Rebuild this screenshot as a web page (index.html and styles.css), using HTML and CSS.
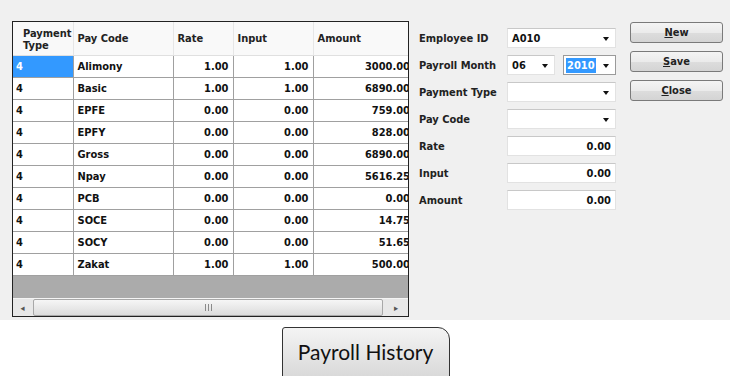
FILE: index.html
```html
<!DOCTYPE html>
<html lang="en">
<head>
  <meta charset="UTF-8">
  <title>Payroll History</title>
  <link rel="stylesheet" href="styles.css">
</head>
<body>

  <!-- Payroll window -->
  <div class="window">

    <!-- Grid -->
    <div class="grid">
      <div class="grid-body">
        <table>
          <colgroup>
            <col class="c-type"><col class="c-code"><col class="c-rate"><col class="c-input"><col class="c-amount">
          </colgroup>
          <thead>
            <tr>
              <th>Payment<br>Type</th>
              <th>Pay Code</th>
              <th>Rate</th>
              <th>Input</th>
              <th>Amount</th>
            </tr>
          </thead>
          <tbody id="rows"></tbody>
        </table>
      </div>
      <div class="hscroll">
        <div class="arrow">&#9666;</div>
        <div class="thumb"><span class="grip"></span></div>
        <div class="arrow right">&#9656;</div>
      </div>
    </div>

    <!-- Form -->
    <div class="form">
      <label>Employee ID</label>
      <div class="field combo">A010</div>

      <label>Payroll Month</label>
      <div class="pair">
        <div class="field combo month">06</div>
        <div class="field combo year focus"><span class="sel">2010</span></div>
      </div>

      <label>Payment Type</label>
      <div class="field combo"></div>

      <label>Pay Code</label>
      <div class="field combo"></div>

      <label>Rate</label>
      <div class="field num">0.00</div>

      <label>Input</label>
      <div class="field num">0.00</div>

      <label>Amount</label>
      <div class="field num">0.00</div>
    </div>

    <!-- Buttons -->
    <div class="buttons">
      <button><u>N</u>ew</button>
      <button><u>S</u>ave</button>
      <button><u>C</u>lose</button>
    </div>
  </div>

  <div class="caption">
    <div class="caption-btn">Payroll History</div>
  </div>

  <script>
    const data = [
      ['4', 'Alimony', '1.00', '1.00', '3000.00'],
      ['4', 'Basic', '1.00', '1.00', '6890.00'],
      ['4', 'EPFE', '0.00', '0.00', '759.00'],
      ['4', 'EPFY', '0.00', '0.00', '828.00'],
      ['4', 'Gross', '0.00', '0.00', '6890.00'],
      ['4', 'Npay', '0.00', '0.00', '5616.25'],
      ['4', 'PCB', '0.00', '0.00', '0.00'],
      ['4', 'SOCE', '0.00', '0.00', '14.75'],
      ['4', 'SOCY', '0.00', '0.00', '51.65'],
      ['4', 'Zakat', '1.00', '1.00', '500.00']
    ];

    const tbody = document.getElementById('rows');
    data.forEach((r, i) => {
      const tr = document.createElement('tr');
      r.forEach((v, j) => {
        const td = document.createElement('td');
        td.textContent = v;
        if (j >= 2) td.className = 'num';
        if (i === 0 && j === 0) td.className = 'selected';
        tr.appendChild(td);
      });
      tbody.appendChild(tr);
    });
  </script>

</body>
</html>
```

FILE: styles.css
```css
body {
  margin: 0;
  background: white;
  font-family: "DejaVu Sans Condensed", "DejaVu Sans", sans-serif;
  font-size: 11px;
  font-weight: bold;
  color: #111;
  overflow: hidden;
}
.window {
  background: #f0f0f0;
  height: 299px;
  padding: 21px 0 0 12px;
  display: flex;
  align-items: flex-start;
}

/* grid */
.grid {
  width: 395px;
  height: 294px;
  border: 1px solid #222;
  display: flex;
  flex-direction: column;
  background: #ababab;
}
.grid-body {
  flex: 1;
  overflow: hidden;
}
table {
  border-collapse: collapse;
  table-layout: fixed;
  width: 397px;
}
.c-type { width: 60px; }
.c-code { width: 100px; }
.c-rate { width: 60px; }
.c-input { width: 80px; }
.c-amount { width: 97px; }
th {
  height: 31px;
  padding: 0 4px;
  text-align: left;
  vertical-align: middle;
  background: #f9f9f9;
  border-right: 1px solid #e6e6e6;
  border-bottom: 1px solid #e0e0e0;
  line-height: 12px;
  color: #222;
}
th:first-child {
  padding-left: 10px;
  padding-top: 2px;
}
td {
  height: 21px;
  padding: 0 4px;
  background: white;
  border-right: 1px solid #a0a0a0;
  border-bottom: 1px solid #a0a0a0;
  white-space: nowrap;
  overflow: hidden;
}
td:first-child {
  padding-left: 3px;
}
td.num {
  text-align: right;
}
td:last-child {
  padding-right: 0;
  border-right: none;
}
td.selected {
  background: #3399ff;
  color: white;
}
.hscroll {
  height: 17px;
  display: flex;
  background: #e8e8e8;
  border-top: 1px solid #f4f4f4;
}
.arrow {
  width: 19px;
  font-size: 9px;
  color: #555;
  display: flex;
  align-items: center;
  justify-content: center;
}
.arrow.right {
  width: 24px;
}
.thumb {
  flex: 1;
  margin: 0 1px;
  border: 1px solid #a8a8a8;
  border-radius: 2px;
  background: linear-gradient(#f6f6f6, #dcdcdc);
  display: flex;
  align-items: center;
  justify-content: center;
}
.grip {
  width: 7px;
  height: 7px;
  background: repeating-linear-gradient(90deg, #8a8a8a 0 1px, transparent 1px 3px);
}

/* form */
.form {
  margin: 7px 0 0 10px;
  display: grid;
  grid-template-columns: 88px 109px;
  grid-auto-rows: 20px;
  row-gap: 7px;
}
.form label {
  display: flex;
  align-items: center;
  color: #222;
}
.field {
  background: white;
  border: 1px solid #e2e2e2;
  border-top-color: #c8c8c8;
  display: flex;
  align-items: center;
  padding: 0 4px;
  position: relative;
}
.field.num {
  justify-content: flex-end;
}
.field.combo::after {
  content: "";
  position: absolute;
  right: 6px;
  top: 8px;
  border-left: 3px solid transparent;
  border-right: 3px solid transparent;
  border-top: 4px solid #111;
}
.pair {
  display: flex;
  gap: 8px;
}
.pair .month {
  width: 38px;
}
.pair .year {
  width: 45px;
  padding-left: 2px;
}
.field.focus {
  border-color: #9a9a9a;
}
.sel {
  background: #3399ff;
  color: white;
  padding: 1px 1px;
}

/* buttons */
.buttons {
  margin-left: 14px;
  margin-top: 1px;
  display: flex;
  flex-direction: column;
  gap: 8px;
}
button {
  width: 93px;
  height: 21px;
  border: 1px solid #7a7a7a;
  border-radius: 3px;
  background: linear-gradient(#f4f4f4 0%, #ebebeb 50%, #dddddd 51%, #d4d4d4 100%);
  font-family: inherit;
  font-size: 11px;
  font-weight: bold;
  color: #222;
  padding: 0;
}

/* caption */
.caption {
  display: flex;
  justify-content: center;
  padding: 7px 0 0 1px;
}
.caption-btn {
  width: 168px;
  height: 56px;
  border: 1px solid #333;
  border-radius: 3px 12px 0 0;
  background: linear-gradient(#f4f4f4, #d6d6d6);
  font-family: Lato, "Open Sans", sans-serif;
  font-weight: normal;
  font-size: 21px;
  color: #111;
  display: flex;
  justify-content: center;
  padding-top: 11px;
  box-sizing: border-box;
}
```
